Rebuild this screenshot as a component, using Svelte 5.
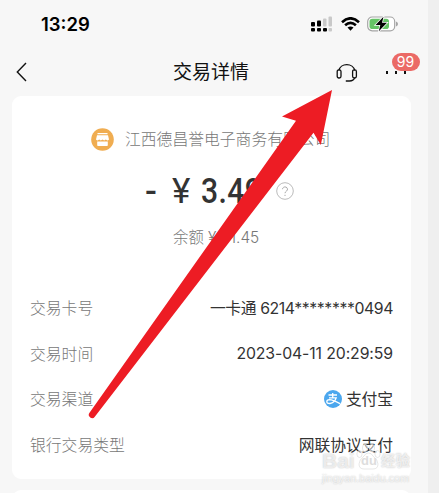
<script>
  const rows = [
    { label: '交易卡号', value: '一卡通 6214********0494', tight: true },
    { label: '交易时间', value: '2023-04-11 20:29:59' },
    { label: '交易渠道', value: '支付宝', alipay: true },
    { label: '银行交易类型', value: '网联协议支付' }
  ];
  const unread = 99;
</script>

<div class="screen">
  <div class="phone">
    <div class="status">
      <span class="time">13:29</span>
      <div class="status-icons">
        <svg width="22" height="16" viewBox="0 0 22 16">
          <g fill="#000">
            <rect x="0" y="6" width="4" height="4.5" rx="1" />
            <rect x="6" y="4.5" width="4" height="6" rx="1" />
            <rect x="0" y="12" width="4" height="3.5" rx="1" />
            <rect x="6" y="12" width="4" height="3.5" rx="1" />
            <rect x="12" y="12" width="4" height="3.5" rx="1" />
          </g>
          <g fill="#c9c9c9">
            <rect x="12" y="2.5" width="3.5" height="8" rx="1" />
            <rect x="17.5" y="0.5" width="3.5" height="10" rx="1" />
            <rect x="17.5" y="12" width="3.5" height="3.5" rx="1" />
          </g>
        </svg>
        <svg class="wifi" width="19" height="14" viewBox="0 0 19 14">
          <g fill="none" stroke="#000" stroke-width="2.6">
            <path d="M1 5.2Q9.5-2.6 18 5.2" />
            <path d="M4.1 8.3Q9.5 3.4 14.9 8.3" />
          </g>
          <path d="M6.5 10.6Q9.5 8.2 12.5 10.6L9.5 13.8Z" />
        </svg>
        <svg width="32" height="16" viewBox="0 0 32 16">
          <rect x="0.7" y="1" width="27" height="13.8" rx="4.5" fill="#fff" stroke="#a5a5a5" stroke-width="1.2" />
          <rect x="2.5" y="2.8" width="19.5" height="10.2" rx="2.8" fill="#65c466" />
          <path d="M29 5.5v5q2-.8 2-2.5t-2-2.5z" fill="#a5a5a5" />
          <path d="M16.5 0.8L8.5 9h4.8l-1.5 6.3L20 6.8h-5z" stroke="#fff" stroke-width="1.5" paint-order="stroke" />
        </svg>
      </div>
    </div>

    <div class="nav">
      <svg width="11" height="20" viewBox="0 0 11 20">
        <path d="M10 1L1.3 10l8.7 9" fill="none" stroke="#111" stroke-width="1.4" />
      </svg>
      <h1>交易详情</h1>
      <div class="actions">
        <svg width="22" height="20" viewBox="0 0 22 20">
          <g fill="none" stroke="#111" stroke-width="1.3">
            <path d="M2.8 8.5a8.2 7.5 0 0 1 16 0" />
            <rect x="1.2" y="7.8" width="3.8" height="8.2" rx="1.7" />
            <rect x="16.6" y="7.8" width="3.8" height="8.2" rx="1.7" />
            <path d="M18.8 15.8Q17.5 19 13.5 19H9.8" />
          </g>
        </svg>
        <div class="more">
          <i></i><i></i><i></i>
          <span class="badge">{unread}</span>
        </div>
      </div>
    </div>

    <main class="card">
      <div class="merchant">
        <svg width="23" height="23" viewBox="0 0 23 23">
          <circle cx="11.5" cy="11.5" r="11.3" fill="#f0ad51" />
          <path d="M6.5 5h10v1.3h-10zM6 7.2h11l1 4.3q-1.6 1.7-3.2.1-1.6 1.6-3.3 0-1.7 1.6-3.3 0Q6.6 13.2 5 11.5zM6.2 13.5h10.6v3.7q0 .8-.8.8H7q-.8 0-.8-.8z" fill="#fff" />
        </svg>
        <span>江西德昌誉电子商务有限公司</span>
      </div>
      <div class="amount">
        <span class="minus">-</span>
        <span class="yen">¥</span>
        <span class="number">3.49</span>
        <svg width="18" height="18" viewBox="0 0 18 18">
          <circle cx="9" cy="9" r="8.3" fill="none" stroke="#bbb" />
          <path d="M6.5 7.2a2.5 2.3 0 1 1 4.2 1.7Q9 10 9 11.2M9 12.8v1.2" fill="none" stroke="#aaa" />
        </svg>
      </div>
      <div class="balance">余额 ¥ 61.45</div>

      <dl>
        {#each rows as row}
          <div class="row">
            <dt>{row.label}</dt>
            <dd class:tight={row.tight}>
              {#if row.alipay}
                <svg width="18" height="18" viewBox="0 0 18 18">
                  <circle cx="9" cy="9" r="9" fill="#4ba7ee" />
                  <path d="M4.5 5h8.5M8.7 3v5M5 7.8h7.2Q10.5 13 6 13.5q-3.2.1-3.2-1.8t2.7-2q3 .1 10.5 4" fill="none" stroke="#fff" stroke-width="1.3" />
                </svg>
              {/if}
              <span>{row.value}</span>
            </dd>
          </div>
        {/each}
      </dl>
    </main>
    <div class="card next"></div>
  </div>

  <svg class="arrow" width="439" height="493" viewBox="0 0 439 493">
    <path d="M332 90L282 116.5L296 120.8L89.5 412.8A3.2 3.2 0 0 0 94.8 416.7L313.5 132.7L320.8 145Z" fill="#ed1c24" />
  </svg>

  <div class="watermark">
    <div class="brand">
      <span class="bai">Bai</span>
      <div class="paw">
        <svg width="25" height="27" viewBox="0 0 25 27">
          <ellipse cx="3.5" cy="11" rx="2.6" ry="3.5" />
          <ellipse cx="9" cy="5" rx="2.6" ry="3.8" />
          <ellipse cx="16" cy="5" rx="2.6" ry="3.8" />
          <ellipse cx="21.5" cy="11" rx="2.6" ry="3.5" />
          <path d="M12.5 10Q15.5 10 17 13q5 4 5 8 0 5-5 5H8q-5 0-5-5 0-4 5-8 1.5-3 4.5-3z" />
        </svg>
        <b>du</b>
      </div>
      <span class="cn">经验</span>
    </div>
    <div class="url">jingyan.baidu.com</div>
  </div>
</div>

<style>
  :global(body) {
    background: #efefef;
  }

  .screen {
    position: relative;
    width: 439px;
    height: 493px;
    overflow: hidden;
    background: #efefef;
    font-family: Inter, 'Noto Sans CJK SC', sans-serif;
    color: #333;
  }

  svg {
    display: block;
    flex: none;
  }

  .phone {
    width: 428px;
    height: 493px;
    overflow: hidden;
    background: #f7f7f7;
  }

  .status {
    display: flex;
    justify-content: space-between;
    align-items: center;
    height: 48px;
    padding: 0 29px 0 41px;
    box-sizing: border-box;
  }

  .time {
    font-size: 18.5px;
    font-weight: 600;
    color: #000;
  }

  .status-icons {
    display: flex;
    align-items: center;
  }

  .wifi {
    margin: 0 7px 0 8px;
  }

  .nav {
    display: grid;
    grid-template-columns: 1fr auto 1fr;
    align-items: center;
    height: 48px;
    padding: 0 22px 0 16px;
  }

  h1 {
    margin: 2px 0 0;
    font-size: 19px;
    font-weight: 400;
    line-height: 28px;
    color: #111;
  }

  .actions {
    display: flex;
    align-items: center;
    justify-content: flex-end;
    gap: 28px;
  }

  .more {
    position: relative;
    display: flex;
    gap: 6.5px;
  }

  .more i {
    width: 2.5px;
    height: 3px;
    background: #111;
  }

  .badge {
    position: absolute;
    left: 6px;
    top: -18px;
    width: 28px;
    height: 18px;
    border-radius: 9px;
    background: #eb6a66;
    color: #fff;
    font-size: 14px;
    line-height: 18px;
    text-align: center;
  }

  .card {
    width: 399px;
    height: 383px;
    margin-left: 12px;
    box-sizing: border-box;
    border-radius: 9px;
    background: #fff;
  }

  .card.next {
    margin-top: 11px;
  }

  main {
    padding: 31px 18px 0;
  }

  .merchant {
    display: flex;
    align-items: center;
    gap: 11px;
    height: 24px;
    padding-left: 61px;
    font-size: 15.8px;
    font-weight: 300;
    color: #777;
    white-space: nowrap;
  }

  .merchant span {
    margin-top: -2px;
  }

  .amount {
    display: flex;
    align-items: center;
    height: 40px;
    margin-top: 20px;
    padding-left: 115px;
    font-family: Roboto, sans-serif;
    font-size: 35px;
    font-weight: 500;
  }

  .minus {
    width: 27px;
  }

  .yen {
    width: 29px;
    font-weight: 400;
  }

  .number {
    width: 75px;
    letter-spacing: 0.5px;
    transform: scaleX(0.86);
    transform-origin: left;
  }

  .balance {
    height: 24px;
    margin-top: 15px;
    padding-left: 143px;
    font-size: 15.4px;
    font-weight: 300;
    line-height: 24px;
    color: #777;
    white-space: nowrap;
  }

  dl {
    margin: 35px 0 0;
  }

  .row {
    display: flex;
    align-items: center;
    justify-content: space-between;
    height: 45.5px;
    font-size: 15.8px;
  }

  dt {
    font-weight: 300;
    color: #777;
  }

  dd {
    display: flex;
    align-items: center;
    gap: 4px;
    margin: 0;
    white-space: nowrap;
    letter-spacing: -0.1px;
  }

  .tight {
    letter-spacing: -0.4px;
  }

  .arrow {
    position: absolute;
    left: 0;
    top: 0;
  }

  .watermark {
    position: absolute;
    left: 322px;
    top: 449px;
    color: rgba(255, 255, 255, 0.7);
    font-family: 'Liberation Sans', 'Noto Sans CJK SC', sans-serif;
    text-shadow: 0 0 1.5px #bbb;
  }

  .brand {
    display: flex;
    align-items: center;
    height: 23px;
  }

  .bai {
    width: 34px;
    font-size: 21px;
    font-weight: 700;
    line-height: 24px;
  }

  .paw {
    position: relative;
    width: 25px;
    height: 27px;
    margin-top: -8px;
  }

  .paw svg {
    fill: rgba(255, 255, 255, 0.5);
    stroke: #ddd;
    stroke-width: 0.7;
  }

  .paw b {
    position: absolute;
    left: 5px;
    top: 11px;
    font-size: 13px;
    line-height: 14px;
    color: #ddd;
    text-shadow: none;
  }

  .cn {
    font-size: 14.5px;
    font-weight: 700;
    line-height: 20px;
  }

  .url {
    font-size: 10.8px;
    line-height: 12px;
    white-space: nowrap;
  }
</style>
